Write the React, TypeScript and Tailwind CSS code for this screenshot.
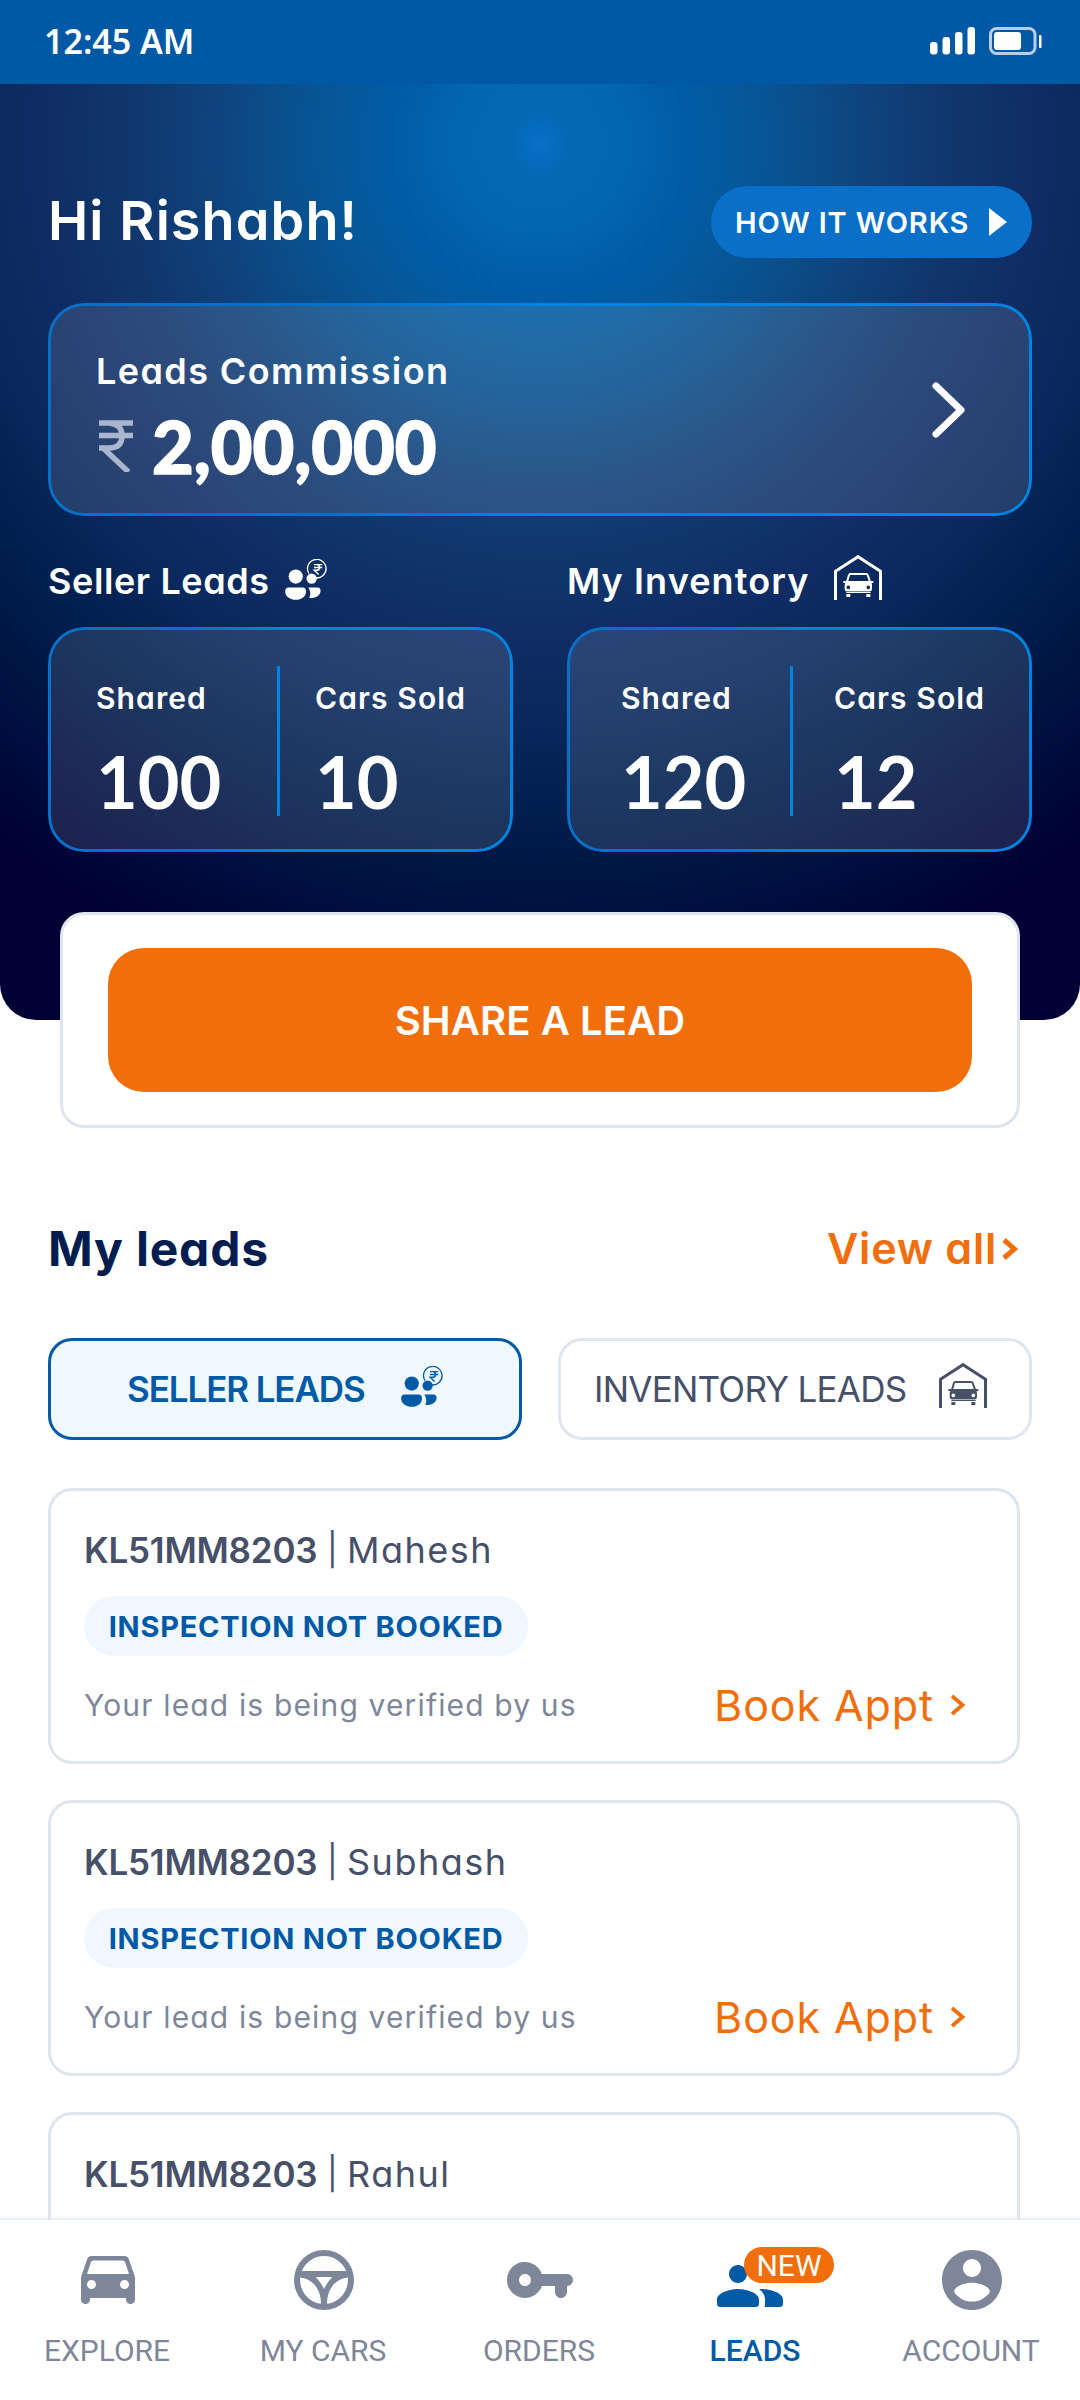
import { clsx } from "clsx";

type Lead = {
  id: number;
  plate: string;
  name: string;
  status?: string;
  note?: string;
};

const leads: Lead[] = [
  {
    id: 1,
    plate: "KL51MM8203",
    name: "Mahesh",
    status: "INSPECTION NOT BOOKED",
    note: "Your lead is being verified by us",
  },
  {
    id: 2,
    plate: "KL51MM8203",
    name: "Subhash",
    status: "INSPECTION NOT BOOKED",
    note: "Your lead is being verified by us",
  },
  { id: 3, plate: "KL51MM8203", name: "Rahul" },
];

const navPaths = {
  car: "M18.92 6.01C18.72 5.42 18.16 5 17.5 5h-11c-.66 0-1.21.42-1.42 1.01L3.11 11.68c-.07.21-.11.43-.11.66v7.16c0 .83.67 1.5 1.5 1.5S6 20.33 6 19.5V19h12v.5c0 .82.67 1.5 1.5 1.5.82 0 1.5-.67 1.5-1.5v-7.16c0-.22-.04-.45-.11-.66l-1.97-5.67zM6.5 16c-.83 0-1.5-.67-1.5-1.5S5.67 13 6.5 13s1.5.67 1.5 1.5S7.33 16 6.5 16zm11 0c-.83 0-1.5-.67-1.5-1.5s.67-1.5 1.5-1.5 1.5.67 1.5 1.5-.67 1.5-1.5 1.5zM5 11l1.27-3.82c.14-.4.52-.68.95-.68h9.56c.43 0 .81.28.95.68L19 11H5z",
  wheel:
    "M12 2a10 10 0 1 0 0 20a10 10 0 1 0 0-20zM4.6 9A8 8 0 0 1 19.4 9zM4.07 11.2C8 11.6 11 14.8 11 19.93A8 8 0 0 1 4.07 11.2zM19.93 11.2C16 11.6 13 14.8 13 19.93A8 8 0 0 0 19.93 11.2zM9.2 11h5.6Q13 12.7 12 15Q11 12.7 9.2 11z",
  key: "M12.65 10C11.7 7.31 8.9 5.5 5.77 6.12c-2.29.46-4.15 2.29-4.63 4.58C.32 14.57 3.26 18 7 18c2.61 0 4.83-1.67 5.65-4H17v2c0 1.1.9 2 2 2s2-.9 2-2v-2c1.1 0 2-.9 2-2s-.9-2-2-2h-8.35zM7 14c-1.1 0-2-.9-2-2s.9-2 2-2 2 .9 2 2-.9 2-2 2z",
  people:
    "M16 11c1.66 0 2.99-1.34 2.99-3S17.66 5 16 5s-3 1.34-3 3 1.34 3 3 3zm-8 0c1.66 0 2.99-1.34 2.99-3S9.66 5 8 5 5 6.34 5 8s1.34 3 3 3zm0 2c-2.33 0-7 1.17-7 3.5V18c0 .55.45 1 1 1h12c.55 0 1-.45 1-1v-1.5c0-2.33-4.67-3.5-7-3.5zm8 0c-.29 0-.62.02-.97.05.02.01.03.03.04.04 1.14.83 1.93 1.94 1.93 3.41V18c0 .35-.07.69-.18 1H22c.55 0 1-.45 1-1v-1.5c0-2.33-4.67-3.5-7-3.5z",
  account:
    "M12 2C6.48 2 2 6.48 2 12s4.48 10 10 10 10-4.48 10-10S17.52 2 12 2zm0 3c1.66 0 3 1.34 3 3s-1.34 3-3 3-3-1.34-3-3 1.34-3 3-3zm0 14.2c-2.5 0-4.71-1.28-6-3.22.03-1.99 4-3.08 6-3.08 1.99 0 5.97 1.09 6 3.08-1.29 1.94-3.5 3.22-6 3.22z",
};

const navItems = [
  { label: "EXPLORE", path: navPaths.car, iconClass: "-mt-[3px]" },
  { label: "MY CARS", path: navPaths.wheel, iconClass: "" },
  { label: "ORDERS", path: navPaths.key, iconClass: "" },
  { label: "LEADS", path: navPaths.people, iconClass: "mt-[6px] -ml-[12px]", active: true },
  { label: "ACCOUNT", path: navPaths.account, iconClass: "" },
];

function SellerIcon({ className }: { className?: string }) {
  return (
    <svg viewBox="45 55 129 124" fill="currentColor" className={clsx("h-[41px] w-[43px] shrink-0", className)}>
      <circle cx="77" cy="108" r="21.5" />
      <path d="M56 141h42q10 0 10 12c0 16-14 25-31 25s-32-9-32-25q0-12 11-12z" />
      <path d="M115 141h27q10 0 10 10c0 14-14 23-34 22q7-17-3-32z" />
      <circle cx="125" cy="114" r="15.5" />
      <path
        d="M117 99.500A28 28 0 1 1 136 112"
        fill="none"
        stroke="currentColor"
        strokeWidth="4"
      />
      <path
        d="M132 72h25M132 81h25M133 72h7q9 0 9 8.500t-9 8.500h-7l13 13"
        fill="none"
        stroke="currentColor"
        strokeWidth="4.500"
      />
    </svg>
  );
}

function GarageIcon({ className }: { className?: string }) {
  return (
    <svg viewBox="42 45 144 135" fill="currentColor" className={clsx("h-[45px] w-[48px] shrink-0", className)}>
      <path d="M46.500 181V94L114 50L181.500 94V181" fill="none" stroke="currentColor" strokeWidth="9" />
      <path d="M81 125L87 105Q88 102 91 102H139Q142 102 143 105L150 125" fill="none" stroke="currentColor" strokeWidth="6" />
      <path
        fillRule="evenodd"
        d="M70 123H160V129H155L156 135V147Q156 154 150 154H80Q74 154 74 147V135L76 129H70zM85 136.500a5.500 5.500 0 1 0 .01 0zM145 136.500a5.500 5.500 0 1 0 .01 0z"
      />
      <path d="M79 155h73v4H79zM79 162h12v9H79zM139 162h12v9h-12z" />
    </svg>
  );
}

function ChevronSmall({ className }: { className?: string }) {
  return (
    <svg viewBox="0 0 16 22" fill="none" stroke="currentColor" className={clsx("h-[22px] w-[16px]", className)}>
      <path d="M2 2L12.500 11L2 20" />
    </svg>
  );
}

function StatusBar() {
  return (
    <div className="flex h-[84px] shrink-0 items-center justify-between bg-[#0159a5] pr-[38px] pl-[44px]">
      <span className="-mt-[3px] font-['Noto_Sans'] text-[34px] leading-none font-semibold text-white">
        12:45 AM
      </span>
      <svg viewBox="0 0 112 28" className="-mt-[2px] h-[28px] w-[112px]">
        <g fill="#fff">
          <rect x="0" y="15" width="7.500" height="12.500" rx="3" />
          <rect x="12.500" y="10" width="7.500" height="17.500" rx="3" />
          <rect x="25" y="5" width="7.500" height="22.500" rx="3" />
          <rect x="37.500" y="0" width="7.500" height="27.500" rx="3" />
          <rect x="64" y="5" width="27" height="18" rx="3" />
          <rect x="109" y="8" width="2.500" height="13" rx="1" />
        </g>
        <rect x="60.500" y="1.500" width="44.500" height="25" rx="6" fill="none" stroke="#b9cde4" strokeWidth="3" />
      </svg>
    </div>
  );
}

// Gradient outline with a translucent fill
function GlassCard({ className, children }: { className?: string; children: React.ReactNode }) {
  return (
    <div className={clsx("relative rounded-[36px] bg-white/[.115]", className)}>
      <div className="pointer-events-none absolute inset-0 rounded-[36px] bg-gradient-to-r from-[#0870c8] from-30% to-[#0084e2] to-50% p-[3px] [mask:linear-gradient(#000_0_0)_content-box_exclude,linear-gradient(#000_0_0)]" />
      {children}
    </div>
  );
}

function Stat({ label, value, className }: { label: string; value: string; className?: string }) {
  return (
    <div className={clsx("flex flex-col text-white", className)}>
      <span className="text-[30px] leading-[40px] font-semibold tracking-[1.100px] whitespace-nowrap">
        {label}
      </span>
      <span className="mt-[27px] font-['Lato'] text-[72px] leading-[72px] font-bold">{value}</span>
    </div>
  );
}

function LeadCard({ plate, name, status, note }: Omit<Lead, "id">) {
  return (
    <div className="h-[276px] shrink-0 rounded-[24px] border-[3px] border-[#dde5ee] bg-white pl-[33px]">
      <div className="flex items-center pt-[39px] text-[35px] leading-[40px] text-[#465069]">
        <span className="w-[243px] font-semibold tracking-[-0.2px]">{plate}</span>
        <span className="w-[20px] text-[32px]">|</span>
        <span className="text-[36px] tracking-[1.500px]">{name}</span>
      </div>
      {status && (
        <div className="mt-[26px] flex h-[60px] w-[444px] items-center justify-center rounded-full bg-[#f0f7ff] text-[29px] leading-none font-bold tracking-[0.750px] text-[#0059a5]">
          {status}
        </div>
      )}
      {note && (
        <div className="mt-[24px] flex h-[50px] items-center justify-between pr-[51px]">
          <span className="text-[30px] leading-none tracking-[1.150px] text-[#7e879a]">
            {note}
          </span>
          <span className="flex items-center text-[43px] leading-none tracking-[0.900px] text-[#f06e0b]">
            Book Appt
            <ChevronSmall className="ml-[16px] stroke-[3.8]" />
          </span>
        </div>
      )}
    </div>
  );
}

export default function App() {
  return (
    <div className="flex h-[2400px] w-[1080px] flex-col overflow-hidden bg-white font-['Inter',sans-serif] [font-feature-settings:'cv11']">
      <StatusBar />

      {/* Hero */}
      <div className="h-[936px] shrink-0 rounded-b-[36px] bg-[radial-gradient(circle_at_540px_60px,#0a70ca_0px,#0468b4_30px,#0366b1_85px,#015ca7_145px,#05599c_195px,#0a4f8c_265px,#10417a_340px,#10366d_415px,#0f2d64_500px,#09285c_575px,#01204f_655px,#001745_725px,#000e40_785px,#000034_880px)] px-[48px] pt-[102px]">
        <div className="flex h-[72px] items-center justify-between">
          <h1 className="-mt-[2px] text-[54px] leading-none font-semibold tracking-[1.100px] text-white">Hi Rishabh!</h1>
          <button className="flex h-[72px] w-[321px] items-center rounded-full bg-[#0a6fc8] pl-[24px] text-[29px] leading-none font-semibold text-white">
            <span className="w-[254px] pt-[1px] text-left tracking-[0.850px] whitespace-nowrap">HOW IT WORKS</span>
            <svg viewBox="0 0 18 28" className="h-[28px] w-[18px] fill-white">
              <path d="M0 0L18 14L0 28z" />
            </svg>
          </button>
        </div>

        <GlassCard className="mt-[45px] flex h-[213px] items-center justify-between pr-[66px] pl-[48px]">
          <div className="flex flex-col pt-[14px] text-white">
            <span className="text-[36px] leading-[40px] font-semibold tracking-[1.400px]">Leads Commission</span>
            <span className="mt-[19px] flex items-center leading-[72px]">
              <svg viewBox="0 0 34 52" fill="none" stroke="#a9b6ce" strokeWidth="5.500" className="ml-[3px] h-[52px] w-[34px]">
                <path d="M0 3H34M0 15.500H34M0 3H10Q23 4 23 16T10 28H0M3 27L29.500 52" />
              </svg>
              <span className="ml-[19px] font-['Lato'] text-[72px] font-black [-webkit-text-stroke:1.5px_white]">
                2,00,000
              </span>
            </span>
          </div>
          <svg viewBox="0 0 34 56" fill="none" stroke="#fff" strokeWidth="7" strokeLinecap="round" strokeLinejoin="round" className="h-[56px] w-[34px]">
            <path d="M4 4L29 28L4 52" />
          </svg>
        </GlassCard>

        <div className="mt-[39px] grid grid-cols-2 gap-x-[54px]">
          <div className="flex h-[45px] items-end text-white">
            <span className="w-[237px] text-[36px] leading-[37px] font-semibold tracking-[0.600px] whitespace-nowrap">
              Seller Leads
            </span>
            <SellerIcon />
          </div>
          <div className="flex h-[45px] items-end text-white">
            <span className="w-[267px] text-[36px] leading-[37px] font-semibold tracking-[1.100px] whitespace-nowrap">
              My Inventory
            </span>
            <GarageIcon />
          </div>
          <GlassCard className="mt-[27px] flex h-[225px] pt-[51px]">
            <Stat label="Shared" value="100" className="ml-[48px] w-[181px]" />
            <div className="-mt-[12px] h-[150px] w-[3px] bg-[#0084e2]" />
            <Stat label="Cars Sold" value="10" className="ml-[35px]" />
          </GlassCard>
          <GlassCard className="mt-[27px] flex h-[225px] pt-[51px]">
            <Stat label="Shared" value="120" className="ml-[54px] w-[169px]" />
            <div className="-mt-[12px] h-[150px] w-[3px] bg-[#0084e2]" />
            <Stat label="Cars Sold" value="12" className="ml-[41px]" />
          </GlassCard>
        </div>
      </div>

      {/* Share a lead */}
      <div className="relative mx-[60px] -mt-[108px] h-[216px] shrink-0 rounded-[24px] border-[3px] border-[#dde5ee] bg-white px-[45px] py-[33px]">
        <button className="h-[144px] w-full rounded-[36px] bg-[#f06e0b] pt-[1px] text-[40px] leading-none font-semibold tracking-[0.100px] text-white">
          SHARE A LEAD
        </button>
      </div>

      {/* My leads */}
      <div className="flex h-[210px] shrink-0 items-center justify-between pt-[31px] pr-[62px] pl-[48px]">
        <h2 className="text-[48px] leading-none font-bold tracking-[0.800px] text-[#021d4f]">My leads</h2>
        <span className="flex items-center text-[43px] leading-none font-semibold tracking-[0.800px] text-[#f06e0b]">
          View all
          <ChevronSmall className="ml-[5px] stroke-[5]" />
        </span>
      </div>

      <div className="mx-[48px] grid h-[102px] shrink-0 grid-cols-2 gap-[36px]">
        <button className="flex items-center rounded-[24px] border-[3px] border-[#005aa5] bg-[#f0f8ff] pl-[76px] text-[35px] leading-none font-semibold text-[#005aa5]">
          <span className="w-[274px] text-left tracking-[-1.100px] whitespace-nowrap">SELLER LEADS</span>
          <SellerIcon className="-mt-[6px]" />
        </button>
        <button className="flex items-center rounded-[24px] border-[3px] border-[#dfe6f0] bg-white pl-[33px] text-[35px] leading-none text-[#465069]">
          <span className="w-[345px] text-left tracking-[-0.750px] whitespace-nowrap">INVENTORY LEADS</span>
          <GarageIcon className="-mt-[8px]" />
        </button>
      </div>

      <div className="mt-[48px] flex min-h-0 flex-1 flex-col gap-[36px] overflow-hidden pr-[60px] pl-[48px]">
        {leads.map(({ id, ...lead }) => (
          <LeadCard key={id} {...lead} />
        ))}
      </div>

      {/* Bottom navigation */}
      <nav className="relative grid h-[180px] shrink-0 grid-cols-5 bg-white font-['Roboto'] shadow-[0_-2px_3px_#e4ebf3]">
        {navItems.map((item) => (
          <div
            key={item.label}
            className={clsx(
              "relative flex flex-col items-center pt-[24px] text-[30px]",
              item.active ? "font-medium text-[#005aa5]" : "text-[#7e8799]"
            )}
          >
            <div className="h-[91px]">
              <svg viewBox="0 0 24 24" fill="currentColor" fillRule="evenodd" className={clsx("h-[72px] w-[72px]", item.iconClass)}>
                <path d={item.path} />
              </svg>
            </div>
            <span className="-ml-[2px] leading-[32px]">{item.label}</span>
            {item.active && (
              <span className="absolute top-[27px] left-[96px] flex h-[36px] w-[90px] items-center justify-center rounded-full bg-[#f06e0b] pt-[2px] text-[30px] leading-none font-normal text-white">
                NEW
              </span>
            )}
          </div>
        ))}
      </nav>
    </div>
  );
}
